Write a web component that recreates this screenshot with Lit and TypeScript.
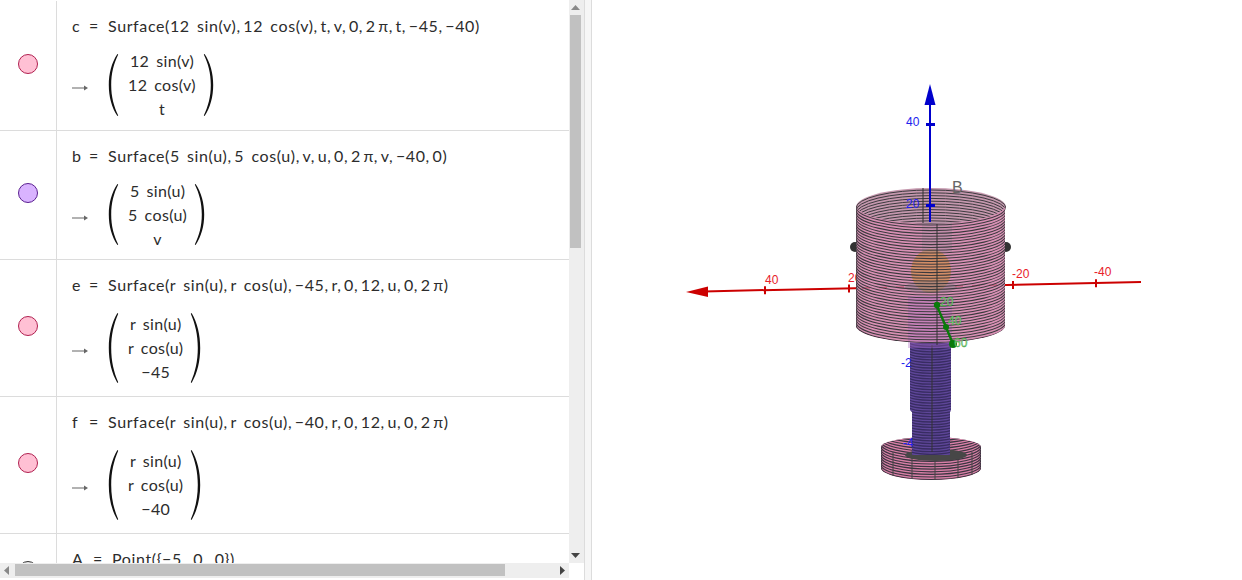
import { LitElement, html, svg, css } from 'lit';
import { customElement } from 'lit/decorators.js';

type Row = { name: string; expr: string; cells: string[]; fill: string; stroke: string; height: number; paren: number };

// thin space after commas, the plain spaces are the wider math gaps
const rows: Row[] = [
  { name: 'c', expr: 'Surface(12 sin(v),\u200912 cos(v),\u2009t,\u2009v,\u20090,\u20092\u2009π,\u2009t,\u2009−45,\u2009−40)', cells: ['12 sin(v)', '12 cos(v)', 't'], fill: '#ffc0d4', stroke: '#b02050', height: 130, paren: 64 },
  { name: 'b', expr: 'Surface(5 sin(u),\u20095 cos(u),\u2009v,\u2009u,\u20090,\u20092\u2009π,\u2009v,\u2009−40,\u20090)', cells: ['5 sin(u)', '5 cos(u)', 'v'], fill: '#d9b3ff', stroke: '#5a1f90', height: 129, paren: 63 },
  { name: 'e', expr: 'Surface(r sin(u),\u2009r cos(u),\u2009−45,\u2009r,\u20090,\u200912,\u2009u,\u20090,\u20092\u2009π)', cells: ['r sin(u)', 'r cos(u)', '−45'], fill: '#ffc0d4', stroke: '#b02050', height: 137, paren: 72 },
  { name: 'f', expr: 'Surface(r sin(u),\u2009r cos(u),\u2009−40,\u2009r,\u20090,\u200912,\u2009u,\u20090,\u20092\u2009π)', cells: ['r sin(u)', 'r cos(u)', '−40'], fill: '#ffc0d4', stroke: '#b02050', height: 137, paren: 72 },
];

@customElement('math-paren')
class MathParen extends LitElement {
  static properties = { side: { type: String } };
  side = 'left';
  static styles = css`
    :host { display: block; width: 11px; flex: none; }
    svg { display: block; width: 11px; height: 100%; }
  `;
  render() {
    const t = this.side === 'right' ? 'translate(11,0) scale(-1,1)' : '';
    return html`<svg viewBox="0 0 11 66" preserveAspectRatio="none">
      <path transform=${t} fill="#111" d="M9.4 1 C3.6 10 .8 21 .8 33 C.8 45 3.6 56 9.4 65 L10.2 64.4 C5.8 55 3.2 45 3.2 33 C3.2 21 5.8 11 10.2 1.6 Z" />
    </svg>`;
  }
}

@customElement('algebra-panel')
class AlgebraPanel extends LitElement {
  static styles = css`
    :host { display: block; width: 584px; height: 578px; flex: none; overflow: hidden; background: #fff; }
    .body { display: grid; grid-template-columns: 569px 15px; height: 563px; }
    .list { overflow: hidden; height: 563px; padding-top: 1px; box-sizing: border-box; }
    .row { display: flex; border-bottom: 1px solid #dcdcdc; box-sizing: border-box; }
    .marble-col { width: 57px; flex: none; border-right: 1px solid #dcdcdc; box-sizing: border-box; display: flex; align-items: center; justify-content: center; }
    .marble { width: 18px; height: 18px; border-radius: 50%; border: 1px solid; margin-bottom: 4px; }
    .content { padding: 15px 0 0 15px; font: 16px/20px Lato, "Noto Sans", sans-serif; color: #2c2c2c; word-spacing: 2.5px; letter-spacing: 0.36px; }
    .line { height: 20px; white-space: pre; display: flex; letter-spacing: 0.62px; }
    .name { width: 8px; flex: none; }
    .name.wide { width: 12px; }
    .eq { width: 28px; text-align: center; }
    .output { display: flex; align-items: center; margin-top: 17px; }
    .arrow { width: 16px; height: 8px; margin-right: 20px; flex: none; margin-top: 6px; }
    .matrix { display: flex; flex-direction: column; align-items: center; padding: 0 7px 0 9px; }
    .matrix div { height: 24px; line-height: 24px; white-space: pre; }
    math-paren { align-self: stretch; }
    .last { display: flex; height: 60px; }
    .last .marble-col { align-items: flex-start; padding-top: 27px; }
    .last .marble { background: #e8e8e8; border-color: #333; }
    .vbar { background: #eee; position: relative; display: flex; flex-direction: column; align-items: center; justify-content: space-between; padding: 5px 3px 5px 0; box-sizing: border-box; }
    .vthumb { position: absolute; left: 1px; right: 3px; top: 15px; height: 233px; background: #c1c1c1; }
    .hbar { height: 15px; width: 569px; background: #eee; position: relative; display: flex; align-items: center; justify-content: space-between; padding: 0 4px; box-sizing: border-box; }
    .hthumb { position: absolute; left: 15px; top: 1px; width: 490px; height: 12px; background: #c1c1c1; }
    .tri { display: block; flex: none; }
  `;
  render() {
    return html`
      <div class="body">
        <div class="list">
          ${rows.map((r) => html`
            <div class="row" style="height:${r.height}px">
              <div class="marble-col"><div class="marble" style="background:${r.fill};border-color:${r.stroke}"></div></div>
              <div class="content">
                <div class="line"><span class="name">${r.name}</span><span class="eq">=</span><span>${r.expr}</span></div>
                <div class="output" style="height:${r.paren}px">
                  <svg class="arrow" viewBox="0 0 16 8"><path d="M0 3.4H12V1.6L16 4 12 6.4V4.6H0Z" fill="#666" /></svg>
                  <math-paren side="left"></math-paren>
                  <div class="matrix">${r.cells.map((c) => html`<div>${c}</div>`)}</div>
                  <math-paren side="right"></math-paren>
                </div>
              </div>
            </div>`)}
          <div class="last">
            <div class="marble-col"><div class="marble"></div></div>
            <div class="content"><div class="line"><span class="name wide">A</span><span class="eq">=</span><span>Point({−5, 0, 0})</span></div></div>
          </div>
        </div>
        <div class="vbar">
          <svg class="tri" width="9" height="5"><path d="M0 5L4.5 0 9 5Z" fill="#888" /></svg>
          <div class="vthumb"></div>
          <svg class="tri" width="9" height="5"><path d="M0 0L9 0 4.5 5Z" fill="#444" /></svg>
        </div>
      </div>
      <div class="hbar">
        <svg class="tri" width="5" height="9"><path d="M5 0V9L0 4.5Z" fill="#888" /></svg>
        <div class="hthumb"></div>
        <svg class="tri" width="5" height="9"><path d="M0 0V9L5 4.5Z" fill="#444" /></svg>
      </div>
    `;
  }
}

// arcs of a horizontal ring, front or back half
const arc = (cx: number, y: number, rx: number, ry: number, front: boolean) =>
  `M${cx - rx} ${y} A${rx} ${ry} 0 0 ${front ? 0 : 1} ${cx + rx} ${y}`;

const range = (from: number, to: number, step: number) => {
  const out: number[] = [];
  for (let v = from; v <= to; v += step) out.push(v);
  return out;
};

@customElement('scene-view')
class SceneView extends LitElement {
  static styles = css`
    :host { display: block; flex: 1; height: 580px; background: #fff; border-left: 1px solid #dcdcdc; overflow: hidden; }
    svg { display: block; }
    text { font-family: "Liberation Sans", Arial, sans-serif; font-size: 12px; }
    .x { fill: #e8202a; }
    .z { fill: #2222ee; }
    .y { fill: #8fdc8f; stroke: #1a8a1a; stroke-width: 0.3px; }
    .b { fill: #666; font-size: 16px; }
  `;
  render() {
    return html`<svg width="650" height="580" viewBox="592 0 650 580">
      <defs>
        <clipPath id="body"><path d="M856 207 L856 327 A75 18 0 0 0 1005 327 L1005 207 A75 18 0 0 0 856 207Z" /></clipPath>
        <clipPath id="top"><ellipse cx="931" cy="207" rx="75" ry="19" /></clipPath>
        <clipPath id="stem"><path d="M910 340H951V410L950 412V455H912V412L910 410Z" /></clipPath>
        <clipPath id="ring"><path d="M881 447 A50 10 0 0 1 981 447 V468 A50 12 0 0 1 881 468Z" /></clipPath>
      </defs>

      <!-- x axis -->
      <path d="M704 291.4 L1141 282" stroke="#cc0000" stroke-width="2" fill="none" />
      <path d="M686 292 L708 286.5 V297Z" fill="#cc0000" />
      ${[[765, 290.3], [849, 288.5], [1013, 285], [1096, 283.2]].map(([x, y]) => svg`<path d="M${x} ${y - 4}V${y + 4}" stroke="#cc0000" stroke-width="2" />`)}
      <text class="x" x="765" y="284">40</text>
      <text class="x" x="848" y="282">20</text>
      <text class="x" x="1012" y="278">-20</text>
      <text class="x" x="1094" y="276">-40</text>

      <!-- far side balls -->
      <circle cx="855" cy="247" r="5" fill="#333" />
      <circle cx="1006" cy="247" r="5" fill="#333" />

      <!-- base ring -->
      <g clip-path="url(#ring)">
        <rect x="880" y="436" width="102" height="46" fill="#d77fa6" />
        ${range(438, 482, 2.6).map((y) => svg`<path d=${arc(931, y - 12, 50, 12, true)} stroke="#3b3540" stroke-width="1.2" fill="none" />`)}
        ${[893, 912, 935, 958, 972].map((x) => svg`<path d="M${x} 452V482" stroke="#444" stroke-width="1" />`)}
      </g>
      <ellipse cx="936" cy="455" rx="31" ry="6" fill="#474747" />

      <!-- stem -->
      <g clip-path="url(#stem)">
        <rect x="908" y="340" width="46" height="118" fill="#5e4698" />
        ${range(340, 458, 2.7).map((y) => svg`<path d=${arc(931, y - 3, 22, 4, true)} stroke="#382c62" stroke-width="1.3" fill="none" />`)}
      </g>
      <path d="M932 345V452" stroke="#333" stroke-width="1" />
      <text class="z" x="901" y="367">-2</text>
      <text class="z" x="903" y="447">-4</text>

      <!-- big cylinder -->
      <path d="M856 207 L856 327 A75 18 0 0 0 1005 327 L1005 207 A75 18 0 0 0 856 207Z" fill="#d890b4" />
      <ellipse cx="931" cy="207" rx="75" ry="19" fill="#c497ad" />
      <g clip-path="url(#top)">
        ${range(190, 240, 2.8).map((y) => svg`<path d=${arc(931, y + 18, 75, 18, false)} stroke="#3c3a3e" stroke-width="1" fill="none" />`)}
      </g>
      <path d="M856 207 V327 H1005 V207 A75 19 0 0 1 856 207Z" fill="#d890b4" />
      <ellipse cx="931" cy="271" rx="20" ry="22" fill="#d08c3c" opacity="0.65" />
      <ellipse cx="931" cy="287" rx="26" ry="6" fill="#8a7a86" opacity="0.45" />
      <rect x="908" y="296" width="44" height="52" fill="#a868c4" opacity="0.35" />
      <rect x="922" y="222" width="30" height="30" fill="#9a8a98" opacity="0.35" />
      <path d="M862 288L905 287 M955 286L1000 285" stroke="#c0304a" stroke-width="1.4" stroke-dasharray="8 9" opacity="0.5" />
      <g clip-path="url(#body)">
        ${range(207, 346, 2.8).map((y) => svg`<path d=${arc(931, y, 75, 18, true)} stroke="#3c3a3e" stroke-width="1.05" fill="none" />`)}
      </g>
      <path d="M923 188V223 M937 224V345" stroke="#333" stroke-width="1" fill="none" />

      <!-- z axis -->
      <path d="M930 100V222" stroke="#0000cc" stroke-width="2" fill="none" />
      <path d="M930 84 L935.5 105 H924.5Z" fill="#0000cc" />
      <path d="M926 124.5H935 M926 205.5H935" stroke="#0000cc" stroke-width="3" />
      <text class="z" x="906" y="126">40</text>
      <text class="z" x="906" y="208">20</text>
      <text class="b" x="952" y="193">B</text>

      <!-- y axis -->
      <path d="M937 306 L946 327 L953 344" stroke="#0a7a0a" stroke-width="2.4" fill="none" />
      <circle cx="937" cy="305" r="3.2" fill="#0a7a0a" />
      <circle cx="946" cy="327" r="3" fill="#0a7a0a" />
      <circle cx="953" cy="344" r="4" fill="#0a7a0a" />
      <text class="y" x="940" y="306">20</text>
      <text class="y" x="948" y="325">40</text>
      <text class="y" x="954" y="347">60</text>
    </svg>`;
  }
}

@customElement('app-root')
export class AppRoot extends LitElement {
  static styles = css`
    :host { display: flex; width: 1242px; height: 580px; background: #fff; overflow: hidden; }
    .split { width: 6px; height: 580px; flex: none; background: #f6f6f6; border-left: 1px solid #dcdcdc; }
  `;
  render() {
    return html`<algebra-panel></algebra-panel><div class="split"></div><scene-view></scene-view>`;
  }
}

export { MathParen, AlgebraPanel, SceneView };
